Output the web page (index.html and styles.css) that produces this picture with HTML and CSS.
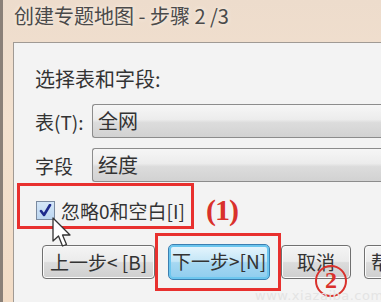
FILE: index.html
```html
<!DOCTYPE html>
<html lang="zh">
<head>
<meta charset="utf-8">
<link rel="stylesheet" href="styles.css">
</head>
<body>
<div class="window">
  <div class="titlebar">创建专题地图 - 步骤 2 /3</div>
  <div class="panel">
    <div class="heading">选择表和字段:</div>
    <div class="row">
      <span class="label">表(T):</span>
      <div class="combo">全网</div>
    </div>
    <div class="row row2">
      <span class="label">字段</span>
      <div class="combo">经度</div>
    </div>
    <div class="checkrow">
      <span class="checkbox"><svg width="13" height="13" viewBox="0 0 13 13"><path d="M2 7 L5 11 L11 1" fill="none" stroke="#1e2a8c" stroke-width="2.6" stroke-linecap="round" stroke-linejoin="round"/></svg></span>
      <span class="checklabel">忽略0和空白[I]</span>
    </div>
    <div class="buttons">
      <div class="btn btn-back">上一步&lt; [B]</div>
      <div class="btn btn-next">下一步&gt;[N]</div>
      <div class="btn btn-cancel">取消</div>
      <div class="btn btn-help">帮</div>
    </div>
  </div>
  <div class="mark mark1"></div>
  <div class="mark mark2"></div>
  <div class="num num1">(1)</div>
  <div class="num num2">2</div>
  <svg class="cursor" width="22" height="32" viewBox="0 0 22 32"><path d="M1 1 L1 24 L6.5 19 L10.5 29 L14.5 27.5 L10.5 18 L18 18 Z" fill="#fff" stroke="#333" stroke-width="1.3" stroke-linejoin="round"/></svg>
  <div class="watermark">www.xiazaiba.com</div>
</div>
</body>
</html>
```
FILE: styles.css
```css
html, body {
  margin: 0;
  padding: 0;
}
body {
  width: 381px;
  height: 302px;
  overflow: hidden;
  font-family: "Noto Sans CJK SC", "Noto Sans", sans-serif;
  color: #333;
}
.window {
  position: relative;
  width: 381px;
  height: 302px;
  box-sizing: border-box;
  border-left: 3px solid #8a8078;
  background: linear-gradient(180deg, #eddccc 0%, #f3e1cf 40%, #f2dcc6 100%);
}
.titlebar {
  height: 42px;
  box-sizing: border-box;
  padding-left: 11px;
  padding-top: 3px;
  font-size: 20px;
  line-height: 26px;
  color: #4a4a4a;
  text-shadow: 0 0 4px #fff6ee;
}
.panel {
  margin-left: 10px;
  height: 270px;
  box-sizing: border-box;
  border: 1px solid #a09a94;
  border-right: none;
  border-bottom: none;
  background: #f3f3f3;
  padding: 23px 0 0 21px;
}
.heading {
  font-size: 20px;
  line-height: 26px;
  color: #333;
}
.row {
  display: flex;
  align-items: center;
  margin-top: 12px;
}
.row2 {
  margin-top: 10px;
}
.label {
  width: 57px;
  flex: none;
  font-size: 19px;
  color: #333;
}
.combo {
  flex: 1;
  height: 34px;
  box-sizing: border-box;
  border: 1px solid #8c8c8c;
  border-right: none;
  border-radius: 3px 0 0 3px;
  background: linear-gradient(180deg, #f6f6f6 0%, #ececec 45%, #dcdcdc 55%, #d2d2d2 100%);
  padding-left: 5px;
  font-size: 20px;
  line-height: 31px;
  color: #333;
}
.checkrow {
  display: flex;
  align-items: center;
  margin-top: 18px;
  height: 20px;
}
.checkbox {
  width: 19px;
  height: 19px;
  box-sizing: border-box;
  border: 1px solid #7a8aa0;
  background: linear-gradient(180deg, #d4e6f8, #bcd6f0);
  display: flex;
  align-items: center;
  justify-content: center;
  margin-left: 1px;
}
.checklabel {
  margin-left: 6px;
  font-size: 19px;
  color: #333;
}
.buttons {
  display: flex;
  align-items: center;
  margin-top: 24px;
  margin-left: 7px;
  height: 36px;
}
.btn {
  flex: none;
  height: 34px;
  box-sizing: border-box;
  border: 1px solid #707070;
  border-radius: 4px;
  background: linear-gradient(180deg, #f4f4f4 0%, #ebebeb 48%, #dcdcdc 52%, #cfcfcf 100%);
  font-size: 19px;
  line-height: 31px;
  color: #333;
  text-align: center;
  box-shadow: inset 0 0 0 1px #fbfbfb;
}
.btn-back {
  width: 113px;
}
.btn-next {
  width: 102px;
  height: 36px;
  margin-left: 13px;
  border: 1px solid #3c7fb1;
  border-radius: 5px;
  background: linear-gradient(180deg, #e8f6fd 0%, #c4e6f7 48%, #a6d8f2 52%, #8fcdee 100%);
  box-shadow: inset 0 0 0 2px #6cc6ee;
}
.btn-cancel {
  width: 70px;
  margin-left: 11px;
}
.btn-help {
  width: 40px;
  margin-left: 13px;
  text-align: left;
  padding-left: 6px;
}
.mark {
  position: absolute;
  border: 3px solid #e8302e;
  box-sizing: border-box;
}
.mark1 {
  left: 14px;
  top: 183px;
  width: 177px;
  height: 46px;
}
.mark2 {
  left: 152px;
  top: 233px;
  width: 126px;
  height: 58px;
}
.num {
  position: absolute;
  color: #d9312c;
  font-family: "Liberation Serif", serif;
  font-weight: bold;
}
.num1 {
  left: 203px;
  top: 194px;
  font-size: 30px;
  line-height: 32px;
  letter-spacing: -1px;
}
.num2 {
  left: 312px;
  top: 265px;
  width: 32px;
  height: 32px;
  box-sizing: border-box;
  border: 2.5px solid #d9312c;
  border-radius: 50%;
  font-size: 24px;
  line-height: 27px;
  text-align: center;
}
.cursor {
  position: absolute;
  left: 49px;
  top: 217px;
}
.watermark {
  position: absolute;
  left: 252px;
  top: 288px;
  font-family: "DejaVu Sans", sans-serif;
  font-size: 13px;
  color: #e4e4e4;
  letter-spacing: 0.5px;
}
```
